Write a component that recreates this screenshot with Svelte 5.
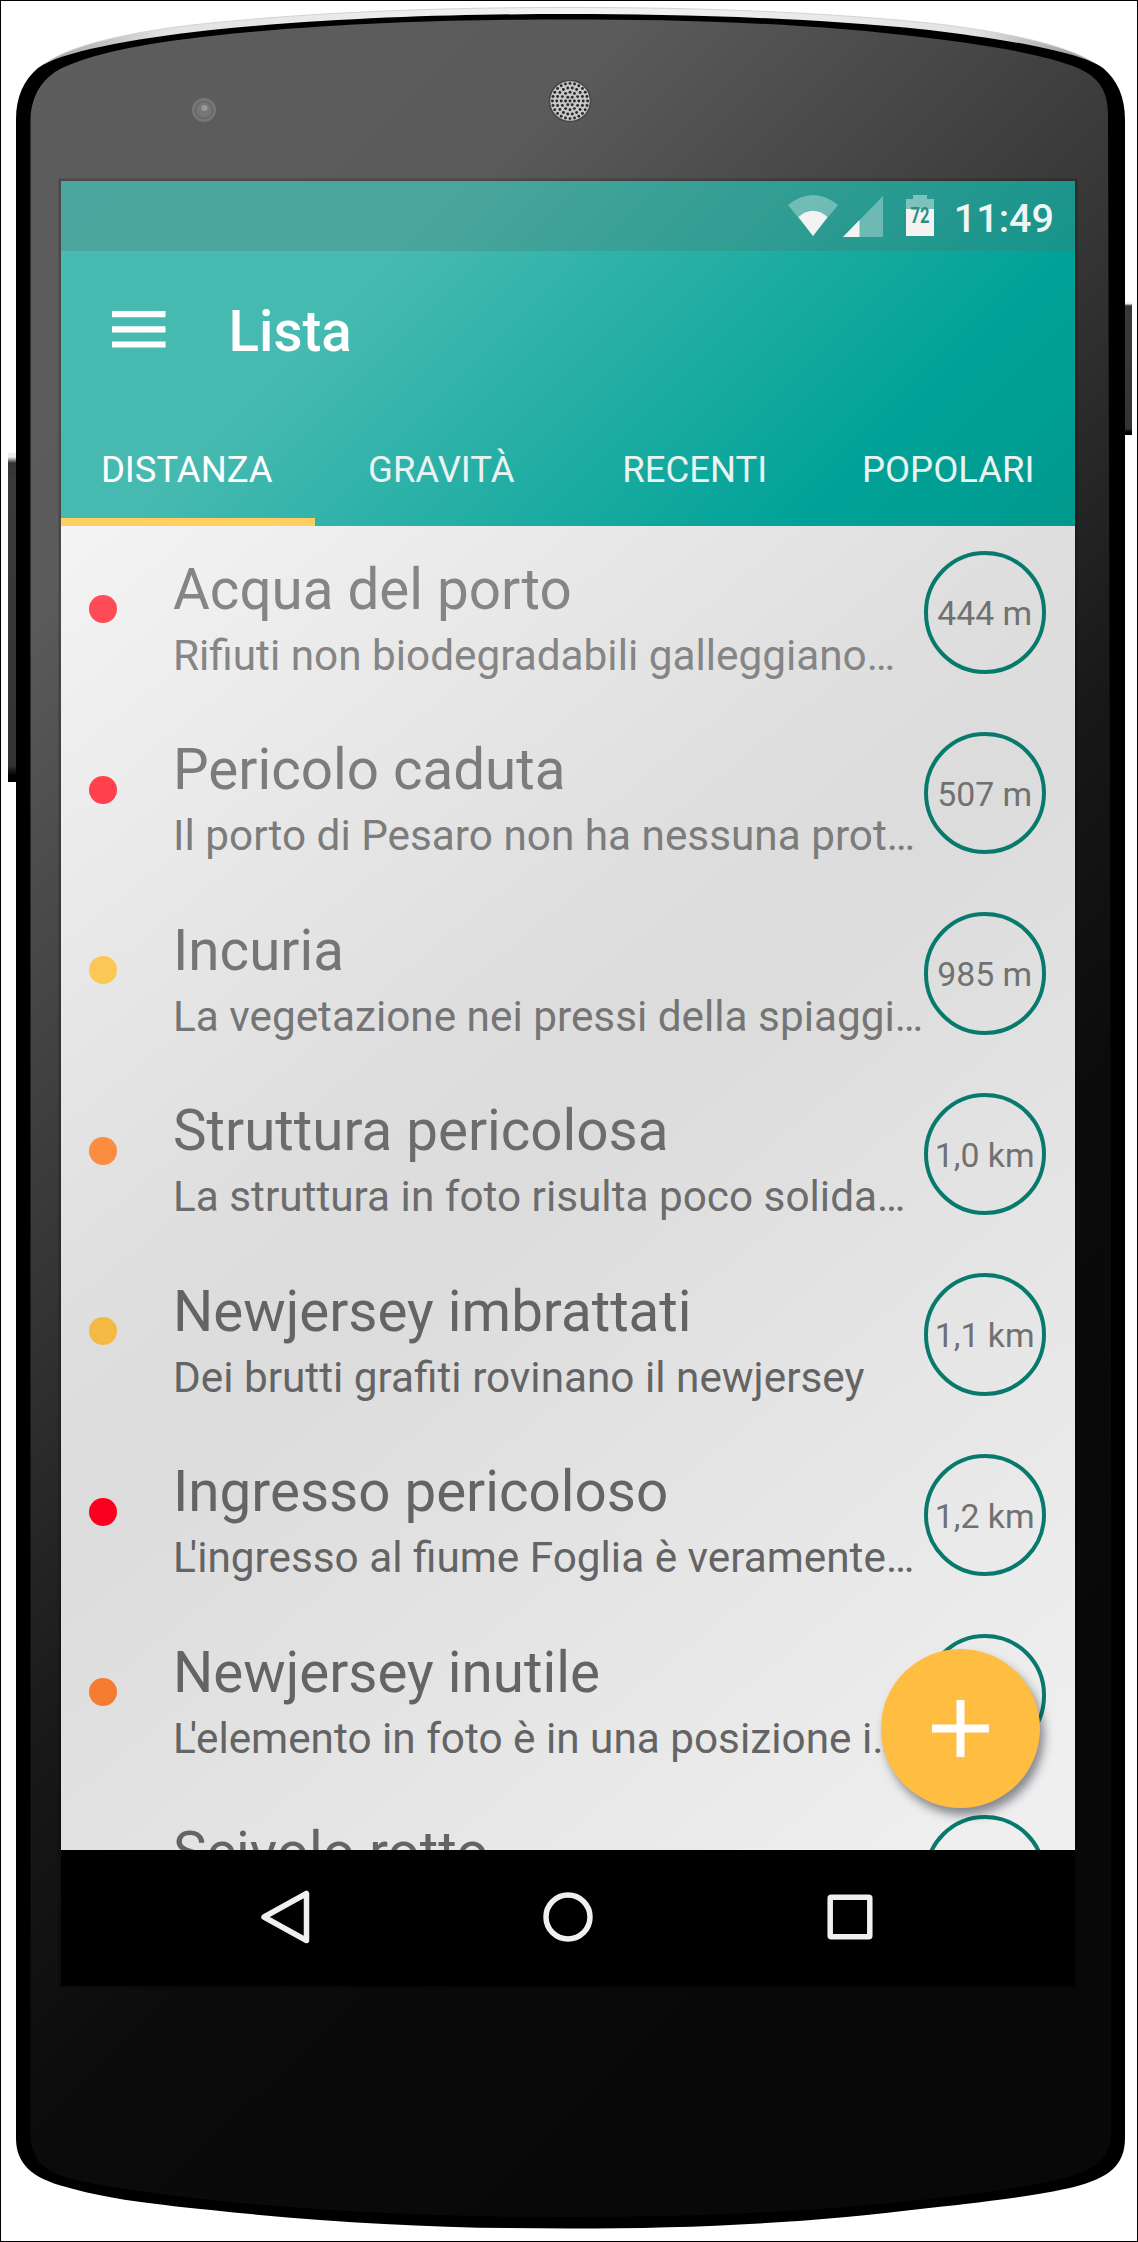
<script>
  const tabs = ['DISTANZA', 'GRAVITÀ', 'RECENTI', 'POPOLARI'];
  // lead: an initial "L" set tight against its apostrophe
  const reports = [
    { title: 'Acqua del porto', lead: '', text: 'Rifiuti non biodegradabili galleggiano…', distance: '444 m', level: 'red-soft', tone: 't1' },
    { title: 'Pericolo caduta', lead: '', text: 'Il porto di Pesaro non ha nessuna prot…', distance: '507 m', level: 'red-mid', tone: 't2' },
    { title: 'Incuria', lead: '', text: 'La vegetazione nei pressi della spiaggi…', distance: '985 m', level: 'yellow', tone: 't3' },
    { title: 'Struttura pericolosa', lead: '', text: 'La struttura in foto risulta poco solida…', distance: '1,0 km', level: 'orange', tone: 't4' },
    { title: 'Newjersey imbrattati', lead: '', text: 'Dei brutti grafiti rovinano il newjersey', distance: '1,1 km', level: 'amber', tone: 't5' },
    { title: 'Ingresso pericoloso', lead: 'L', text: "'ingresso al fiume Foglia è veramente…", distance: '1,2 km', level: 'red', tone: 't5' },
    { title: 'Newjersey inutile', lead: 'L', text: "'elemento in foto è in una posizione i…", distance: '', level: 'orange-deep', tone: 't5' },
    { title: 'Scivolo rotto', lead: '', text: '', distance: '', level: 'none', tone: 't5' }
  ];

  // perforations of the speaker grille, ring by ring
  const holes = [{ x: 0, y: 0 }];
  for (let ring = 1; ring <= 4; ring++) {
    const count = ring * 6;
    for (let i = 0; i < count; i++) {
      const a = (i / count) * Math.PI * 2;
      holes.push({ x: Math.cos(a) * ring * 4.4, y: Math.sin(a) * ring * 4.4 });
    }
  }
</script>

<main class="stage">
  <svg class="body" width="1138" height="2242" viewBox="0 0 1138 2242" aria-hidden="true">
    <defs>
      <linearGradient id="face" gradientUnits="userSpaceOnUse" x1="0" y1="0" x2="1400" y2="1400">
        <stop offset="0" stop-color="#5d5d5d" />
        <stop offset=".23" stop-color="#5b5b5b" />
        <stop offset=".48" stop-color="#343434" />
        <stop offset=".64" stop-color="#181818" />
        <stop offset=".78" stop-color="#0b0b0b" />
        <stop offset="1" stop-color="#080808" />
      </linearGradient>
      <linearGradient id="rim" x1="0" x2="1" y1="0" y2="0">
        <stop offset="0" stop-color="#a0a0a0" />
        <stop offset=".12" stop-color="#e2e2e2" />
        <stop offset=".5" stop-color="#f4f4f4" />
        <stop offset=".88" stop-color="#e2e2e2" />
        <stop offset="1" stop-color="#909090" />
      </linearGradient>
      <linearGradient id="key" x1="0" x2="0" y1="0" y2="1">
        <stop offset="0" stop-color="#eee" />
        <stop offset=".012" stop-color="#eee" />
        <stop offset=".03" stop-color="#333" />
        <stop offset=".1" stop-color="#3a3a3a" />
        <stop offset=".95" stop-color="#333" />
        <stop offset=".98" stop-color="#000" />
      </linearGradient>
    </defs>
    <rect x="8" y="453" width="9" height="329" fill="url(#key)" />
    <rect x="1124" y="302" width="8" height="133" fill="url(#key)" />
    <path fill="url(#rim)" stroke="#d4d4d4" d="M38 70C58 47 130 31 211 23C340 10 470 7.500 570 7.500S800 10 929 23C1010 32 1082 48 1103 70L1060 90H80Z" />
    <path d="M16 120C16 96 24 80 38 68C60 52 130 39 211 30C340 17 470 14 570 14S800 17 929 30C1010 40 1080 52 1103 68C1117 80 1125 96 1125 120V2138C1125 2166 1108 2178 1074 2187C1040 2195 1000 2200 929 2208C800 2224 690 2228.500 570 2228.500S340 2224 211 2210C140 2203 100 2197 66 2187C32 2178 16 2164 16 2138Z" />
    <path fill="url(#face)" d="M30.500 120C31 96 42 78 62 68C100 51 150 43 211 36C340 22 470 19.500 570 19.500S800 22 929 38C990 45 1050 56 1078 68C1100 78 1108 92 1108 115L1111 1200V2132C1111 2160 1092 2171 1064 2178C1030 2187 990 2192 929 2199C800 2213 690 2217 570 2217S340 2213 211 2200C150 2193 100 2186 72 2179C44 2172 30.500 2160 30.500 2132Z" />
    <circle cx="204" cy="110" r="12" fill="#777" />
    <circle cx="204" cy="110" r="8.500" fill="none" stroke="#6a6a6a" stroke-width="2" />
    <circle cx="204.500" cy="108" r="3" fill="#999" />
    <circle cx="570" cy="101" r="20.500" fill="#c8c8c8" stroke="#444" stroke-width="1.500" />
    <g fill="#2a2a2a">
      {#each holes as hole}
        <circle cx={570 + hole.x} cy={101 + hole.y} r="1.450" />
      {/each}
    </g>
    <rect x="60" y="180" width="1016" height="1807" fill="none" stroke="#000" stroke-opacity=".2" stroke-width="3" />
  </svg>

  <section class="screen">
    <header class="top">
      <div class="status">
        <svg class="wifi" width="50" height="41" viewBox="0 0 50 41" aria-hidden="true">
          <path fill="#fff" fill-opacity=".32" d="M0 10Q25-10 50 10L25 41Z" />
          <path fill="#f3f3f3" d="M10.500 22Q25 9.500 39.500 22L25 41Z" />
        </svg>
        <svg class="signal" width="40" height="41" viewBox="0 0 40 41" aria-hidden="true">
          <path fill="#fff" fill-opacity=".32" d="M40 0V41H0Z" />
          <path fill="#f3f3f3" d="M16.500 24V41H0Z" />
        </svg>
        <svg class="battery" width="28" height="41" viewBox="0 0 28 41" aria-hidden="true">
          <path fill="#fff" fill-opacity=".4" d="M7 0H21V4H28V14H0V4H7Z" />
          <path fill="#f3f3f3" d="M0 14H28V41H0Z" />
          <text x="14" y="28" text-anchor="middle" textLength="19" lengthAdjust="spacingAndGlyphs">72</text>
        </svg>
        <time>11:49</time>
      </div>
      <div class="appbar">
        <svg width="54" height="37" viewBox="0 0 54 37" aria-hidden="true">
          <path fill="#fff" d="M0 0H53.500V6.200H0ZM0 15.200H53.500V21.400H0ZM0 30.400H53.500V36.600H0Z" />
        </svg>
        <h1>Lista</h1>
      </div>
      <nav class="tabs">
        {#each tabs as tab, i}
          <span class="tab" class:active={i === 0}>{tab}</span>
        {/each}
      </nav>
    </header>

    <div class="list">
      {#each reports as r}
        <article class="row {r.tone}">
          <i class="dot {r.level}"></i>
          <div class="copy">
            <h2>{r.title}</h2>
            <p>{#if r.lead}<span class="lead">{r.lead}</span>{/if}{r.text}</p>
          </div>
          <span class="distance">{r.distance}</span>
        </article>
      {/each}
    </div>

    <footer class="navbar">
      <svg width="54" height="60" viewBox="0 0 54 60" aria-hidden="true"><path d="M48.500 6.500V53.500L6 30Z" /></svg>
      <svg width="54" height="60" viewBox="0 0 54 60" aria-hidden="true"><circle cx="27" cy="30" r="22" /></svg>
      <svg width="54" height="60" viewBox="0 0 54 60" aria-hidden="true"><rect x="7.200" y="10.200" width="39.600" height="39.600" rx="1" /></svg>
    </footer>

    <button class="fab" aria-label="Aggiungi">
      <svg width="57" height="57" viewBox="0 0 57 57" aria-hidden="true"><path fill="#fff" d="M24.500 0H32.500V24.500H57V32.500H32.500V57H24.500V32.500H0V24.500H24.500Z" /></svg>
    </button>
  </section>
</main>

<style>
  :global(body) { margin: 0; background: #fff; }
  .stage {
    position: relative;
    box-sizing: border-box;
    width: 1138px;
    height: 2242px;
    border: 1px solid #000;
    padding: 180px 0 0 60px;
    overflow: hidden;
    font-family: Roboto, sans-serif;
  }
  .body { position: absolute; left: -1px; top: -1px; }
  .screen {
    position: relative;
    display: flex;
    flex-direction: column;
    width: 1014px;
    height: 1805px;
    overflow: hidden;
  }
  .top {
    flex: none;
    height: 345px;
    background: linear-gradient(135deg, #47bbb2 0, #46bab1 290px, #00a297 765px, #00998e 961px);
  }
  .status {
    display: flex;
    box-sizing: border-box;
    height: 69.500px;
    padding: 14px 21px 0 0;
    justify-content: flex-end;
    background: rgba(85, 110, 105, .27);
  }
  .signal { margin: 1px 23px 0 5px; }
  .battery { margin-right: 20px; }
  .battery text { font: 700 22px Roboto, sans-serif; fill: #2a8f84; }
  time { margin-top: 0; font-size: 39.500px; line-height: 47px; font-weight: 500; color: #f0f5f4; }
  .appbar {
    display: flex;
    height: 187.500px;
    padding-left: 51px;
    align-items: flex-start;
  }
  .appbar svg { margin-top: 60px; }
  h1 { margin: 48px 0 0 62.500px; font-size: 56.500px; line-height: 67px; font-weight: 500; color: #fff; }
  .tabs { display: grid; grid-template-columns: repeat(4, 1fr); height: 88px; }
  .tab {
    box-sizing: border-box;
    padding-top: 10px;
    text-align: center;
    font-size: 36.500px;
    line-height: 44px;
    color: #e9f3f2;
  }
  .active { padding-right: 2px; border-bottom: 8.500px solid #ffcf62; color: #fff; }
  .list {
    flex: none;
    height: 1324px;
    overflow: hidden;
    background: linear-gradient(141deg, #f4f4f4 0, #dedede 640px, #dcdcdc 800px, #efefef 1590px);
  }
  .row {
    display: flex;
    box-sizing: border-box;
    height: 180.500px;
    padding: 25px 29px 0 28px;
    align-items: flex-start;
  }
  .dot { flex: none; width: 28px; height: 28px; margin-top: 44px; border-radius: 50%; }
  .copy { flex: 1; min-width: 0; margin-left: 56px; white-space: nowrap; }
  h2 { margin: 5.500px 0 0; font-size: 56.500px; line-height: 66px; font-weight: 400; }
  p { margin: 8px 0 0; font-size: 42.300px; line-height: 50px; }
  .lead { margin-right: -6px; }
  .distance {
    box-sizing: border-box;
    flex: none;
    width: 122.500px;
    height: 122.500px;
    border: 4.500px solid #087a6d;
    border-radius: 50%;
    text-align: center;
    font-size: 33.800px;
    line-height: 117px;
    white-space: nowrap;
    color: #717171;
  }
  .t1 { color: #858585; }
  .t2 { color: #7c7c7c; }
  .t3 { color: #757575; }
  .t4 { color: #6c6c6c; }
  .t5 { color: #646464; }
  .red-soft { background: #ff4b55; }
  .red-mid { background: #ff414c; }
  .yellow { background: #fbc757; }
  .orange { background: #fb8c40; }
  .amber { background: #f4b942; }
  .red { background: #f8001e; }
  .orange-deep { background: #f57c30; }
  .navbar {
    display: flex;
    flex: 1;
    box-sizing: border-box;
    padding: 37px 198px 0 197px;
    justify-content: space-between;
    background: #000;
  }
  .navbar svg { fill: none; stroke: #f0f0f0; stroke-width: 5.500; stroke-linejoin: round; }
  .fab {
    position: absolute;
    left: 820px;
    top: 1468px;
    display: flex;
    width: 159px;
    height: 159px;
    padding: 0;
    border: 0;
    border-radius: 50%;
    align-items: center;
    justify-content: center;
    background: #ffbe42;
    box-shadow: 4px 7px 10px rgba(30, 35, 50, .5);
  }
</style>
